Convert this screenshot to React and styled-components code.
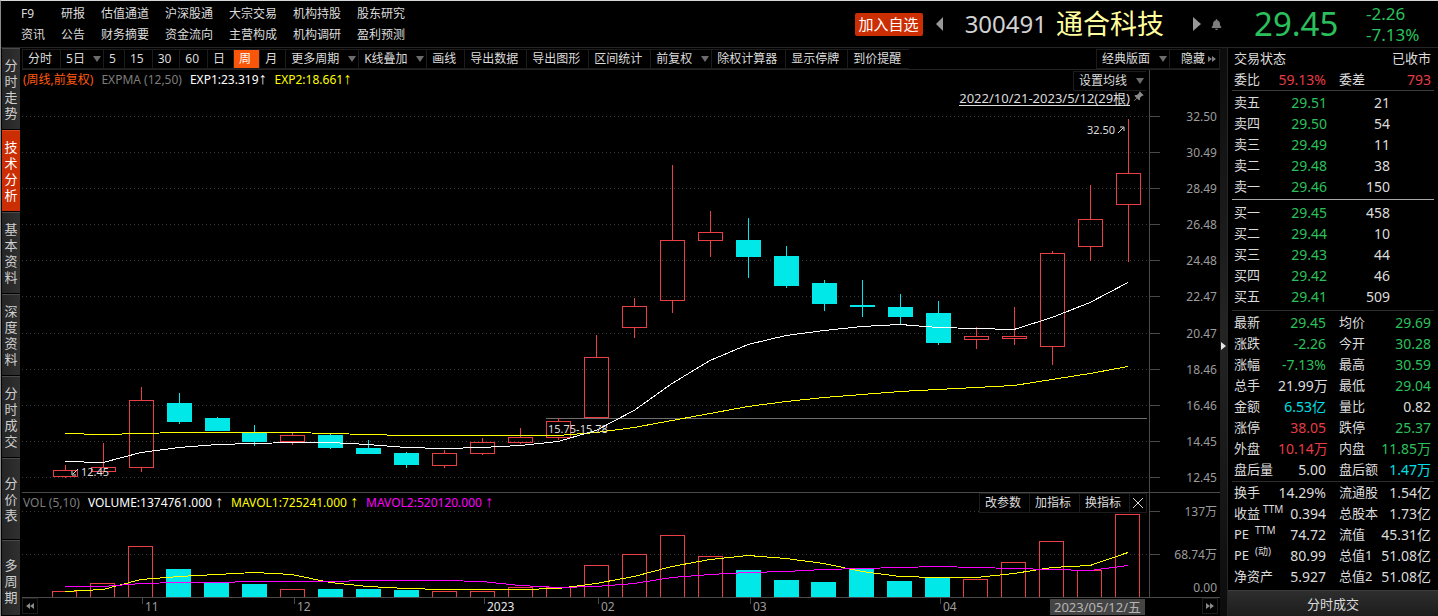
import React, { useState } from 'react';
import styled, { createGlobalStyle } from 'styled-components';
import { FaBell } from 'react-icons/fa';
import { BsPinAngleFill } from 'react-icons/bs';

const colors = {
  up: '#eb3f46',
  down: '#00e8e8',
  green: '#2bc05c',
  red: '#e63c46',
  cyan: '#00e0e6',
  text: '#dcdcdc',
};

const navColumns = [
  ['F9', '资讯'],
  ['研报', '公告'],
  ['估值通道', '财务摘要'],
  ['沪深股通', '资金流向'],
  ['大宗交易', '主营构成'],
  ['机构持股', '机构调研'],
  ['股东研究', '盈利预测'],
];

const sideTabs = ['分时走势', '技术分析', '基本资料', '深度资料', '分时成交', '分价表', '多周期'];

const toolbarItems = [
  { text: '分时' },
  { text: '5日', menu: true },
  { text: '5' },
  { text: '15' },
  { text: '30' },
  { text: '60' },
  { text: '日' },
  { text: '周' },
  { text: '月' },
  { text: '更多周期', menu: true },
  { text: 'K线叠加', menu: true },
  { text: '画线' },
  { text: '导出数据' },
  { text: '导出图形' },
  { text: '区间统计' },
  { text: '前复权', menu: true },
  { text: '除权计算器' },
  { text: '显示停牌' },
  { text: '到价提醒' },
];

const sells = [
  ['卖五', '29.51', '21'],
  ['卖四', '29.50', '54'],
  ['卖三', '29.49', '11'],
  ['卖二', '29.48', '38'],
  ['卖一', '29.46', '150'],
];

const buys = [
  ['买一', '29.45', '458'],
  ['买二', '29.44', '10'],
  ['买三', '29.43', '44'],
  ['买四', '29.42', '46'],
  ['买五', '29.41', '509'],
];

const { green, red, cyan } = colors;

const quotes = [
  ['最新', '29.45', green, '均价', '29.69', green],
  ['涨跌', '-2.26', green, '今开', '30.28', green],
  ['涨幅', '-7.13%', green, '最高', '30.59', green],
  ['总手', '21.99万', null, '最低', '29.04', green],
  ['金额', '6.53亿', cyan, '量比', '0.82', null],
  ['涨停', '38.05', red, '跌停', '25.37', green],
  ['外盘', '10.14万', red, '内盘', '11.85万', green],
  ['盘后量', '5.00', null, '盘后额', '1.47万', cyan],
];

const finances = [
  ['换手', '14.29%', null, '流通股', '1.54亿', null],
  ['收益', '0.394', null, '总股本', '1.73亿', null, 'TTM'],
  ['PE', '74.72', null, '流值', '45.31亿', null, 'TTM'],
  ['PE', '80.99', null, '总值1', '51.08亿', null, '(动)'],
  ['净资产', '5.927', null, '总值2', '51.08亿', null],
];

// plot geometry, in viewBox units
const LEFT = 22;
const WIDTH = 1127;
const PRICE = { top: 70, height: 422 };
const VOLUME = { top: 493, height: 104 };
const STEP = 37.958;

// [high, low, bodyTop, bodyBottom, isUp]
const candles = [
  [465, 478, 470, 476, 1],
  [443, 474, 467, 471, 1],
  [387, 472, 400, 467, 1],
  [393, 424, 403, 422, 0],
  [417, 431, 418, 431, 0],
  [425, 446, 433, 442, 0],
  [433, 445, 435, 441, 1],
  [433, 449, 435, 448, 0],
  [440, 454, 448, 454, 0],
  [452, 468, 453, 465, 0],
  [450, 468, 453, 465, 1],
  [438, 455, 442, 453, 1],
  [428, 444, 437, 442, 1],
  [418, 440, 421, 437, 1],
  [335, 418, 357, 417, 1],
  [298, 338, 306, 327, 1],
  [165, 313, 240, 300, 1],
  [211, 257, 232, 240, 1],
  [218, 278, 240, 257, 0],
  [246, 288, 256, 286, 0],
  [280, 311, 283, 304, 0],
  [280, 317, 305, 307, 0],
  [294, 324, 307, 317, 0],
  [301, 345, 313, 343, 0],
  [327, 349, 336, 339, 1],
  [307, 345, 336, 338, 1],
  [251, 365, 253, 346, 1],
  [185, 261, 219, 246, 1],
  [119, 262, 173, 204, 1],
];

const volumes = [
  591, 583, 546, 569, 583, 584, 589, 589, 589, 590, 591, 591, 587, 587, 565, 554, 535, 556, 570,
  580, 582, 569, 581, 578, 579, 562, 541, 570, 514,
];

const exp1 = [
  461, 462, 452, 447, 444, 443, 442, 442, 444, 447, 448, 447, 445, 441, 430, 410, 383, 360, 344,
  335, 330, 326, 324, 327, 328, 329, 317, 302, 282,
];
const exp2 = [
  433, 434, 433, 432, 432, 432, 432, 433, 434, 435, 435, 435, 435, 435, 432, 427, 420, 413, 406,
  401, 397, 394, 391, 389, 387, 385, 379, 373, 366,
];
const mavol1 = [
  591, 589, 579, 576, 574, 572, 574, 582, 586, 588, 589, 589, 589, 588, 583, 576, 566, 559, 555,
  558, 563, 571, 576, 577, 577, 573, 567, 565, 552,
];
const mavol2 = [
  586, 586, 583, 582, 582, 581, 581, 581, 580, 580, 580, 581, 585, 587, 586, 583, 577, 574, 572,
  571, 569, 568, 567, 566, 567, 568, 569, 570, 565,
];

const priceTicks = [
  [116, '32.50'],
  [152, '30.49'],
  [188, '28.49'],
  [224, '26.48'],
  [260, '24.48'],
  [296, '22.47'],
  [333, '20.47'],
  [369, '18.46'],
  [405, '16.46'],
  [441, '14.45'],
  [477, '12.45'],
];
const volumeTicks = [
  [511, '137万'],
  [554, '68.74万'],
  [587, '0.00', true],
];
const months = [
  [142, '11'],
  [294, '12'],
  [484, '2023', true],
  [598, '02'],
  [750, '03'],
  [940, '04'],
];

const centerX = (i) => Math.floor(65.2 + i * STEP);
const barX = (i) => Math.floor(52.8 + i * STEP);
const toPoints = (list) => list.map((y, i) => `${centerX(i)},${y + 0.5}`).join(' ');
const leftOf = (x) => `${((x - LEFT) / WIDTH) * 100}%`;
const topOf = (y, pane) => `${((y - pane.top) / pane.height) * 100}%`;

const Caret = () => (
  <CaretIcon viewBox="0 0 8 6" aria-hidden="true">
    <path d="M0 0H8L4 6Z" fill="currentColor" />
  </CaretIcon>
);

const Double = ({ back }) => (
  <svg width="8" height="6" viewBox="0 0 8 6" aria-hidden="true">
    <path d={back ? 'M4 0V6L0 3ZM8 0V6L4 3Z' : 'M0 0V6L4 3ZM4 0V6L8 3Z'} fill="currentColor" />
  </svg>
);

const Dropdown = ({ text }) => (
  <SelectBox>
    <Select aria-label={text} defaultValue={text}>
      <option>{text}</option>
    </Select>
    <Caret />
  </SelectBox>
);

const GridLines = ({ ticks }) =>
  ticks
    .filter((tick) => !tick[2])
    .map(([y]) => (
      <line
        key={y}
        x1={LEFT}
        x2={LEFT + WIDTH}
        y1={y + 0.5}
        y2={y + 0.5}
        stroke="#3a3a3a"
        strokeDasharray="1 3"
      />
    ));

const Axis = ({ ticks, pane }) => (
  <YAxis>
    {ticks.map(([y, text, noTick]) => (
      <YLabel key={text} $noTick={noTick} style={{ top: topOf(y, pane) }}>
        {text}
      </YLabel>
    ))}
  </YAxis>
);

const PriceChart = () => (
  <Plot
    viewBox={`${LEFT} ${PRICE.top} ${WIDTH} ${PRICE.height}`}
    preserveAspectRatio="none"
    role="img"
    aria-label="周K线"
  >
    <GridLines ticks={priceTicks} />
    <line x1="546" x2="1147" y1="418.5" y2="418.5" stroke="#6e6e6e" />
    {candles.map(([high, low, top, bottom, up], i) => {
      const x = centerX(i);
      const color = up ? colors.up : colors.down;
      return (
        <g key={i} stroke={color}>
          <line x1={x + 0.5} x2={x + 0.5} y1={high} y2={top} />
          <line x1={x + 0.5} x2={x + 0.5} y1={bottom} y2={low} />
          {up ? (
            <rect x={x - 11.5} y={top + 0.5} width="24" height={bottom - top} fill="none" />
          ) : (
            <rect x={x - 12} y={top} width="25" height={bottom - top} fill={color} stroke="none" />
          )}
        </g>
      );
    })}
    <polyline points={toPoints(exp2)} fill="none" stroke="#ffff00" />
    <polyline points={toPoints(exp1)} fill="none" stroke="#ffffff" />
  </Plot>
);

const VolumeChart = () => (
  <Plot
    viewBox={`${LEFT} ${VOLUME.top} ${WIDTH} ${VOLUME.height}`}
    preserveAspectRatio="none"
    role="img"
    aria-label="成交量"
  >
    <GridLines ticks={volumeTicks} />
    {volumes.map((y, i) => {
      const x = barX(i);
      return candles[i][4] ? (
        <rect key={i} x={x + 0.5} y={y + 0.5} width="24" height="120" fill="none" stroke={colors.up} />
      ) : (
        <rect key={i} x={x} y={y} width="25" height="120" fill={colors.down} />
      );
    })}
    <polyline points={toPoints(mavol1)} fill="none" stroke="#ffff00" />
    <polyline points={toPoints(mavol2)} fill="none" stroke="#ff00ff" />
  </Plot>
);

const Orders = ({ rows, caption }) => (
  <Table aria-label={caption}>
    <colgroup>
      <col width="40" />
      <col width="53" />
      <col width="63" />
      <col />
    </colgroup>
    <tbody>
      {rows.map(([label, price, count]) => (
        <tr key={label}>
          <Label scope="row">{label}</Label>
          <Value $color={green}>{price}</Value>
          <Value>{count}</Value>
          <td />
        </tr>
      ))}
    </tbody>
  </Table>
);

const Figures = ({ rows, caption }) => (
  <Table aria-label={caption}>
    <colgroup>
      <col width="44" />
      <col width="48" />
      <col width="53" />
      <col />
    </colgroup>
    <tbody>
      {rows.map(([label, value, color, label2, value2, color2, note]) => (
        <tr key={label2}>
          <Label scope="row">
            {label}
            {note && <Note $wide={label === 'PE'}>{note}</Note>}
          </Label>
          <Value $color={color}>{value}</Value>
          <Label scope="row" $second>
            {label2}
          </Label>
          <Value $color={color2}>{value2}</Value>
        </tr>
      ))}
    </tbody>
  </Table>
);

const App = () => {
  const [tab, setTab] = useState('技术分析');
  const [period, setPeriod] = useState('周');

  return (
    <Page>
      <GlobalStyle />
      <Header>
        <Nav>
          {navColumns.map((column) => (
            <NavColumn key={column[0]}>
              {column.map((text) => (
                <a key={text} href="#nav">
                  {text}
                </a>
              ))}
            </NavColumn>
          ))}
        </Nav>
        <Stock>
          <AddButton type="button">加入自选</AddButton>
          <ArrowButton type="button" aria-label="上一只">
            <svg width="7" height="14" viewBox="0 0 7 14">
              <path d="M7 0V14L0 7Z" fill="currentColor" />
            </svg>
          </ArrowButton>
          <Code>300491</Code>
          <Name>通合科技</Name>
          <ArrowButton type="button" aria-label="下一只" $next>
            <svg width="8" height="14" viewBox="0 0 8 14">
              <path d="M0 0V14L8 7Z" fill="currentColor" />
            </svg>
          </ArrowButton>
          <BellButton type="button" aria-label="提醒">
            <FaBell size={11} />
          </BellButton>
        </Stock>
        <PriceBlock>
          <Price>29.45</Price>
          <Change>
            <span>-2.26</span>
            <span>-7.13%</span>
          </Change>
        </PriceBlock>
      </Header>

      <Content>
        <Sidebar>
          {sideTabs.map((text) => (
            <SideTab key={text} type="button" $active={tab === text} onClick={() => setTab(text)}>
              <span>{text}</span>
            </SideTab>
          ))}
        </Sidebar>

        <Main>
          <Toolbar>
            {toolbarItems.map(({ text, menu }) =>
              menu ? (
                <Dropdown key={text} text={text} />
              ) : (
                <ToolButton
                  key={text}
                  type="button"
                  $active={period === text}
                  onClick={() => setPeriod(text)}
                >
                  {text}
                </ToolButton>
              )
            )}
            <Spacer />
            <Dropdown text="经典版面" />
            <HideButton type="button">
              隐藏
              <Double />
            </HideButton>
          </Toolbar>

          <PricePane>
            <PlotArea>
              <PriceChart />
              <Legend>
                <LegendText $color="#ff5a0f">(周线,前复权)</LegendText>
                <LegendText $color="#7d7d7d">EXPMA (12,50)</LegendText>
                <LegendText $color="#ffffff">
                  EXP1:23.319<Arrow>↑</Arrow>
                </LegendText>
                <LegendText $color="#ffff00">
                  EXP2:18.661<Arrow>↑</Arrow>
                </LegendText>
              </Legend>
              <Corner>
                <Dropdown text="设置均线" />
                <Range>
                  <a href="#range">2022/10/21-2023/5/12(29根)</a>
                  <BsPinAngleFill size={11} />
                </Range>
              </Corner>
              <Mark style={{ left: leftOf(1087), top: topOf(130, PRICE) }}>
                32.50
                <svg width="8" height="8" viewBox="0 0 8 8">
                  <path d="M1 7L6 2M3 1H7V5" fill="none" stroke="currentColor" />
                </svg>
              </Mark>
              <Mark style={{ left: leftOf(71), top: topOf(472, PRICE) }}>
                <svg width="8" height="8" viewBox="0 0 8 8">
                  <path d="M7 1L2 6M1 3V7H5" fill="none" stroke="currentColor" />
                </svg>
                12.45
              </Mark>
              <Mark style={{ left: leftOf(548), top: topOf(429, PRICE) }}>15.75-15.78</Mark>
            </PlotArea>
            <Axis ticks={priceTicks} pane={PRICE} />
          </PricePane>

          <VolumePane>
            <PlotArea>
              <VolumeChart />
              <Legend>
                <LegendText $color="#7d7d7d">VOL (5,10)</LegendText>
                <LegendText $color="#ffffff">
                  VOLUME:1374761.000 <Arrow>↑</Arrow>
                </LegendText>
                <LegendText $color="#ffff00">
                  MAVOL1:725241.000 <Arrow>↑</Arrow>
                </LegendText>
                <LegendText $color="#ff00ff">
                  MAVOL2:520120.000 <Arrow>↑</Arrow>
                </LegendText>
              </Legend>
              <PaneButtons>
                <ToolButton type="button">改参数</ToolButton>
                <ToolButton type="button">加指标</ToolButton>
                <ToolButton type="button">换指标</ToolButton>
                <CloseButton type="button" aria-label="关闭">
                  <svg width="10" height="10" viewBox="0 0 10 10">
                    <path d="M0 0L10 10M10 0L0 10" stroke="currentColor" />
                  </svg>
                </CloseButton>
              </PaneButtons>
            </PlotArea>
            <Axis ticks={volumeTicks} pane={VOLUME} />
          </VolumePane>

          <TimeAxis>
            <Months>
              {months.map(([x, text, year]) => (
                <Month key={text} $year={year} style={{ left: leftOf(x) }}>
                  {text}
                </Month>
              ))}
              <DateBadge>2023/05/12/五</DateBadge>
            </Months>
            <ScrollButton type="button" aria-label="向前">
              <Double back />
            </ScrollButton>
            <ScrollButton type="button" aria-label="向后">
              <Double />
            </ScrollButton>
          </TimeAxis>
        </Main>

        <Splitter type="button" aria-label="收起">
          <svg width="5" height="8" viewBox="0 0 5 8">
            <path d="M0 0V8L5 4Z" fill="#e6e6e6" />
          </svg>
        </Splitter>

        <Panel>
          <Status>
            <span>交易状态</span>
            <span>已收市</span>
          </Status>
          <Figures rows={[['委比', '59.13%', red, '委差', '793', red]]} caption="委比" />
          <Section $line="#3c3c3c" $pad="1px 0 2px">
            <Orders rows={sells} caption="卖盘" />
          </Section>
          <Section $line="#a8a8a8" $pad="2px 0 3px">
            <Orders rows={buys} caption="买盘" />
          </Section>
          <Section $line="#2c2c2c" $pad="1px 0">
            <Figures rows={quotes} caption="行情" />
          </Section>
          <Section $line="#2c2c2c" $pad="0 0 3px">
            <Figures rows={finances} caption="财务" />
          </Section>
          <TradesButton type="button">分时成交</TradesButton>
        </Panel>
      </Content>
    </Page>
  );
};

export default App;

const GlobalStyle = createGlobalStyle`
  * {
    box-sizing: border-box;
  }
  body {
    margin: 0;
    background: #000;
    color: ${colors.text};
    font-family: 'Noto Sans', 'Noto Sans CJK SC', sans-serif;
    font-size: 12px;
    line-height: 16px;
  }
  button, select {
    margin: 0;
    padding: 0;
    border: none;
    background: none;
    color: inherit;
    font: inherit;
    cursor: pointer;
  }
  a {
    color: inherit;
    text-decoration: none;
  }
  svg {
    display: block;
    flex: none;
  }
`;

const Page = styled.div`
  display: flex;
  flex-direction: column;
  min-width: 1280px;
  min-height: 100vh;
  border-top: 1px solid #d4d8d8;
  border-left: 1px solid #8a8a8a;
`;

const Header = styled.header`
  display: flex;
  align-items: center;
  height: 47px;
  border-bottom: 1px solid #262626;
  white-space: nowrap;
`;

const Nav = styled.nav`
  display: flex;
  gap: 16px;
  padding-left: 20px;
`;

const NavColumn = styled.div`
  display: flex;
  flex-direction: column;
  min-width: 24px;
  line-height: 21px;
`;

const Stock = styled.div`
  display: flex;
  align-items: center;
  margin-left: auto;
`;

const AddButton = styled.button`
  width: 68px;
  height: 23px;
  border-radius: 2px;
  background: #cc2e04;
  color: #fff;
  font-size: 15px;
  line-height: 22px;
`;

const ArrowButton = styled.button`
  margin: ${(props) => (props.$next ? '0 10px 0 29px' : '0 22px 0 13px')};
  color: #989898;
`;

const Code = styled.span`
  color: #d2d2d2;
  font-size: 24px;
`;

const Name = styled.span`
  margin-left: 9px;
  color: #ffff9e;
  font-size: 27px;
`;

const BellButton = styled.button`
  color: #7d7d7d;
`;

const PriceBlock = styled.div`
  display: flex;
  align-items: center;
  width: 216px;
  padding-left: 32px;
  color: ${colors.green};
`;

const Price = styled.strong`
  width: 112px;
  font-size: 33px;
  font-weight: 400;
`;

const Change = styled.div`
  display: flex;
  flex-direction: column;
  font-size: 17px;
  line-height: 21px;
`;

const Content = styled.div`
  display: flex;
  flex: 1;
`;

const Sidebar = styled.div`
  display: flex;
  flex-direction: column;
  width: 21px;
  padding: 0 2px 0 1px;
`;

const SideTab = styled.button`
  display: flex;
  align-items: center;
  justify-content: center;
  height: 82px;
  border-top: 1px solid ${(props) => (props.$active ? '#e04a20' : '#4a4a4a')};
  border-bottom: 1px solid #000;
  background: ${(props) =>
    props.$active ? '#cc2e04' : 'linear-gradient(to right, #252525, #303030)'};
  color: ${(props) => (props.$active ? '#fff' : '#cfcfcf')};
  > span {
    width: 13px;
    font-size: 13px;
    word-break: break-all;
  }
  &:last-child {
    flex: 1;
    height: auto;
    padding-top: 6px;
  }
`;

const Main = styled.main`
  display: flex;
  flex-direction: column;
  flex: 1;
  min-width: 0;
`;

const Toolbar = styled.div`
  display: flex;
  align-items: center;
  height: 22px;
  border-bottom: 1px solid #222;
  white-space: nowrap;
`;

const Spacer = styled.div`
  flex: 1;
`;

const ToolButton = styled.button`
  height: 20px;
  padding: 0 8px 0 5px;
  border: 1px solid #1c1c1c;
  border-width: 1px 0 1px 1px;
  background: ${(props) => (props.$active ? '#fa560a' : '#000')};
  color: ${(props) => (props.$active ? '#fff' : colors.text)};
  white-space: nowrap;
  &:hover {
    color: #fff;
  }
`;

const HideButton = styled(ToolButton)`
  display: flex;
  align-items: center;
  gap: 3px;
  padding: 0 3px 0 11px;
  border-right-width: 1px;
  > svg {
    color: #7d7d7d;
  }
`;

const CloseButton = styled(ToolButton)`
  padding: 0 3px;
  border-right-width: 1px;
`;

const SelectBox = styled.label`
  display: flex;
  align-items: center;
  gap: 8px;
  height: 20px;
  padding: 0 2px 0 5px;
  border: 1px solid #1c1c1c;
  border-width: 1px 0 1px 1px;
  background: #000;
`;

const Select = styled.select`
  appearance: none;
  height: 18px;
  outline: none;
`;

const CaretIcon = styled.svg`
  width: 8px;
  height: 6px;
  color: #6c6c6c;
  pointer-events: none;
`;

const Pane = styled.section`
  display: grid;
  grid-template-columns: 1fr 71px;
  border-bottom: 1px solid #4a4a4a;
`;

const PricePane = styled(Pane)`
  flex: 1 0 423px;
`;

const VolumePane = styled(Pane)`
  height: 105px;
`;

const PlotArea = styled.div`
  position: relative;
  min-width: 0;
`;

const Plot = styled.svg`
  position: absolute;
  width: 100%;
  height: 100%;
  shape-rendering: crispEdges;
`;

const Legend = styled.div`
  position: absolute;
  top: 2px;
  left: 1px;
  display: flex;
  gap: 8px;
  white-space: nowrap;
`;

const LegendText = styled.span`
  color: ${(props) => props.$color};
`;

const Arrow = styled.span`
  font-family: 'Liberation Sans', sans-serif;
  font-size: 16px;
  line-height: 12px;
`;

const Corner = styled.div`
  position: absolute;
  top: 1px;
  right: 3px;
  display: flex;
  flex-direction: column;
  align-items: flex-end;
`;

const Range = styled.div`
  display: flex;
  gap: 3px;
  padding-right: 2px;
  font-size: 13px;
  white-space: nowrap;
  > a {
    border-bottom: 1px solid ${colors.text};
    line-height: 14px;
  }
  > svg {
    color: #8a8a8a;
  }
`;

const PaneButtons = styled.div`
  position: absolute;
  top: 0;
  right: 2px;
  display: flex;
`;

const Mark = styled.span`
  position: absolute;
  display: flex;
  align-items: center;
  gap: 2px;
  font-size: 11px;
  transform: translateY(-50%);
  white-space: nowrap;
`;

const YAxis = styled.div`
  position: relative;
  border-left: 1px solid #4a4a4a;
  color: #9c9c9c;
`;

const YLabel = styled.span`
  position: absolute;
  left: 0;
  right: 3px;
  margin-top: 1px;
  text-align: right;
  transform: translateY(-50%);
  &::before {
    content: '';
    position: absolute;
    top: 7px;
    left: 0;
    width: ${(props) => (props.$noTick ? '0' : '10px')};
    height: 1px;
    background: #4a4a4a;
  }
`;

const TimeAxis = styled.div`
  display: flex;
  align-items: flex-start;
  justify-content: space-between;
  position: relative;
  height: 18px;
  padding-right: 2px;
`;

const Months = styled.div`
  position: absolute;
  top: 0;
  left: 0;
  right: 71px;
  height: 18px;
`;

const Month = styled.span`
  position: absolute;
  top: 0;
  padding-left: 3px;
  color: ${(props) => (props.$year ? '#e6e6e6' : '#9c9c9c')};
  line-height: 18px;
  &::before {
    content: '';
    position: absolute;
    left: 0;
    width: 1px;
    height: 6px;
    background: #4a4a4a;
  }
`;

const DateBadge = styled.span`
  position: absolute;
  top: 1px;
  right: 4px;
  padding: 0 4px;
  background: #444;
  color: #b4b4b4;
  font-size: 13px;
`;

const ScrollButton = styled.button`
  display: flex;
  align-items: center;
  justify-content: center;
  position: relative;
  width: 16px;
  height: 16px;
  border: 1px solid #1c1c1c;
  color: #8a8a8a;
`;

const Splitter = styled.button`
  display: flex;
  align-items: center;
  justify-content: center;
  width: 8px;
  border-right: 1px solid #262626;
  background: linear-gradient(#0c0c0c, #242424 50%, #0c0c0c);
  padding-top: 28px;
`;

const Panel = styled.aside`
  display: flex;
  flex-direction: column;
  width: 210px;
  font-size: 13px;
`;

const Status = styled.div`
  display: flex;
  justify-content: space-between;
  padding: 0 7px 0 6px;
  line-height: 21px;
`;

const Section = styled.div`
  margin: 0 4px;
  padding: ${(props) => props.$pad};
  border-top: 1px solid ${(props) => props.$line};
  > table {
    width: calc(100% + 8px);
    margin: 0 -4px;
  }
`;

const Table = styled.table`
  width: 100%;
  padding: 0 7px 0 6px;
  border-spacing: 0;
  table-layout: fixed;
  td, th {
    height: 21px;
    padding: 0;
    line-height: 21px;
    white-space: nowrap;
  }
`;

const Label = styled.th`
  && {
    padding-left: ${(props) => (props.$second ? '13px' : '0')};
  }
  font-weight: 400;
  text-align: left;
`;

const Note = styled.sup`
  margin-left: ${(props) => (props.$wide ? '6px' : '3px')};
  font-size: 10px;
  line-height: 10px;
`;

const Value = styled.td`
  color: ${(props) => props.$color || colors.text};
  font-size: 14px;
  text-align: right;
`;

const TradesButton = styled.button`
  flex: 1;
  min-height: 25px;
  border-top: 1px solid #3c3c3c;
  background: linear-gradient(#2e2e2e, #1c1c1c);
`;
